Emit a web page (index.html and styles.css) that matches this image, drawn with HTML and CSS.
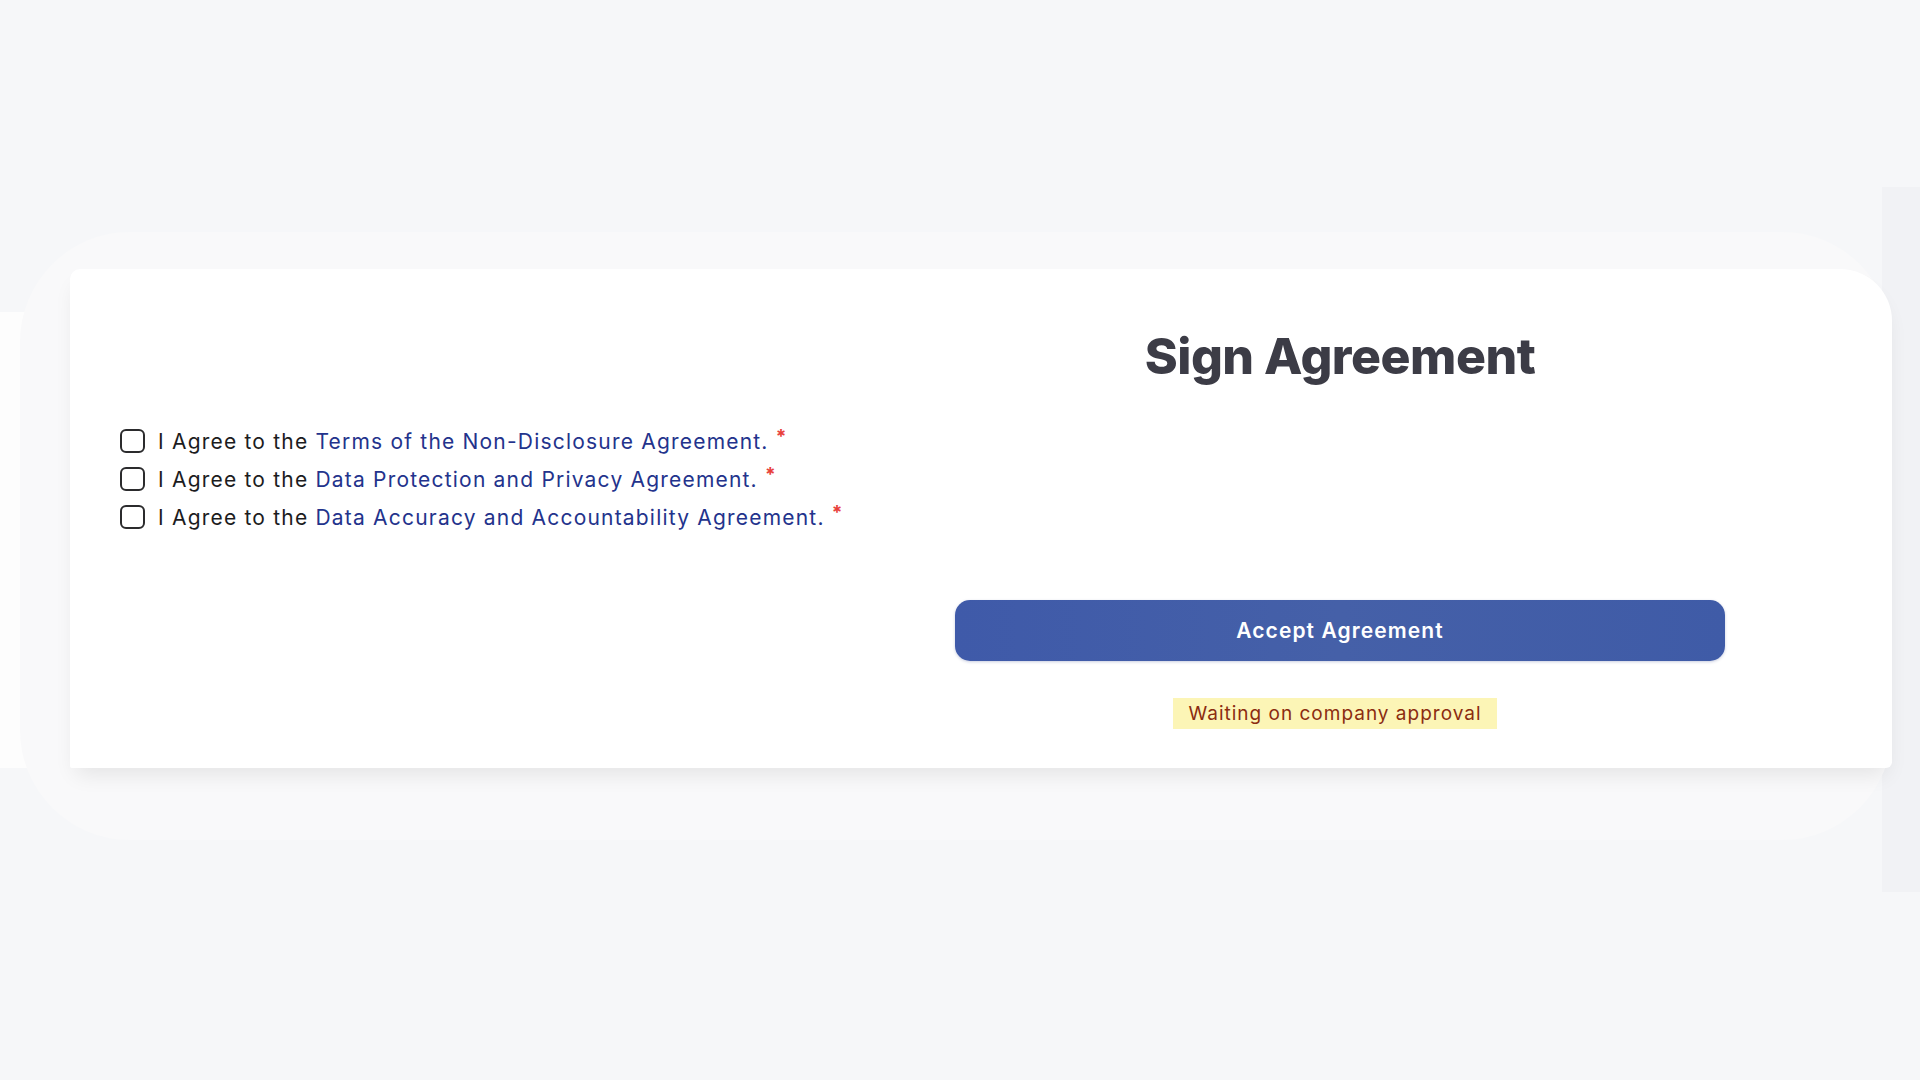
FILE: index.html
```html
<!DOCTYPE html>
<html lang="en">
<head>
  <meta charset="UTF-8" />
  <meta name="viewport" content="width=device-width, initial-scale=1.0"/>
  <title>Sign Agreement</title>
  <link rel="stylesheet" href="styles.css">
</head>
<body>
  <div class="edge-left"></div>
  <div class="edge-right"></div>

  <div class="halo">
    <div class="card">
      <div class="terms">
        <label class="term">
          <input type="checkbox">
          <span>I Agree to the <a href="#">Terms of the Non-Disclosure Agreement.</a></span>
          <span class="req">*</span>
        </label>
        <label class="term">
          <input type="checkbox">
          <span>I Agree to the <a href="#">Data Protection and Privacy Agreement.</a></span>
          <span class="req">*</span>
        </label>
        <label class="term">
          <input type="checkbox">
          <span>I Agree to the <a href="#">Data Accuracy and Accountability Agreement.</a></span>
          <span class="req">*</span>
        </label>
      </div>

      <div class="sign">
        <h1>Sign Agreement</h1>
        <button class="accept-btn">Accept Agreement</button>
        <div class="status">Waiting on company approval</div>
      </div>
    </div>
  </div>
</body>
</html>
```

FILE: styles.css
```css
* {
  margin: 0;
  padding: 0;
  box-sizing: border-box;
  font-family: 'Inter', 'Open Sans', sans-serif;
}

body {
  background: #f6f7f9;
  min-height: 100vh;
  position: relative;
  overflow: hidden;
}

.edge-left {
  position: absolute;
  left: 0;
  top: 312px;
  width: 60px;
  height: 456px;
  background: #fdfdfd;
}

.edge-right {
  position: absolute;
  right: 0;
  top: 187px;
  width: 38px;
  height: 705px;
  background: #f1f2f5;
}

.halo {
  margin: 232px 28px 0 20px;
  height: 608px;
  padding-top: 37px;
  padding-left: 50px;
  background: #f9f9fa;
  border-radius: 110px;
  position: relative;
}

.card {
  display: grid;
  grid-template-columns: 1fr 770px;
  column-gap: 65px;
  width: 1822px;
  height: 499px;
  padding: 57px 167px 0 50px;
  background: #fff;
  border-radius: 10px 52px 6px 2px;
  box-shadow: 0 12px 22px -6px rgba(0, 0, 0, 0.09);
}

.terms {
  display: flex;
  flex-direction: column;
  margin-top: 96px;
}

.term {
  display: flex;
  align-items: center;
  height: 38px;
  font-size: 21px;
  letter-spacing: 1.2px;
  color: #1c1c1e;
  cursor: pointer;
  white-space: nowrap;
}

.term input {
  appearance: none;
  width: 25px;
  height: 24px;
  border: 2px solid #2b2b2d;
  border-radius: 6px;
  margin-right: 13px;
  flex-shrink: 0;
  cursor: pointer;
}

.term a {
  color: #23338c;
  text-decoration: none;
}

.req {
  color: #e8403a;
  font-size: 19px;
  font-weight: 700;
  align-self: flex-start;
  margin-top: 3px;
  margin-left: 7px;
}

.sign {
  display: flex;
  flex-direction: column;
  align-items: center;
}

h1 {
  font-size: 50px;
  line-height: 60px;
  font-weight: 800;
  color: #3c3c46;
  letter-spacing: -0.5px;
}

.accept-btn {
  width: 770px;
  height: 61px;
  margin-top: 214px;
  background: linear-gradient(to right, #3f5aa9, #4560a8, #3f5ba7);
  color: #fff;
  border: none;
  border-radius: 15px;
  font-size: 21px;
  font-weight: 600;
  letter-spacing: 1.1px;
  box-shadow: 0 1px 3px rgba(40, 60, 130, 0.25);
  cursor: pointer;
}

.status {
  margin-top: 37px;
  margin-right: 10px;
  height: 31px;
  line-height: 31px;
  padding: 0 15px;
  background: #fcf5b6;
  color: #8b2c10;
  font-size: 19px;
  letter-spacing: 1px;
}
```
